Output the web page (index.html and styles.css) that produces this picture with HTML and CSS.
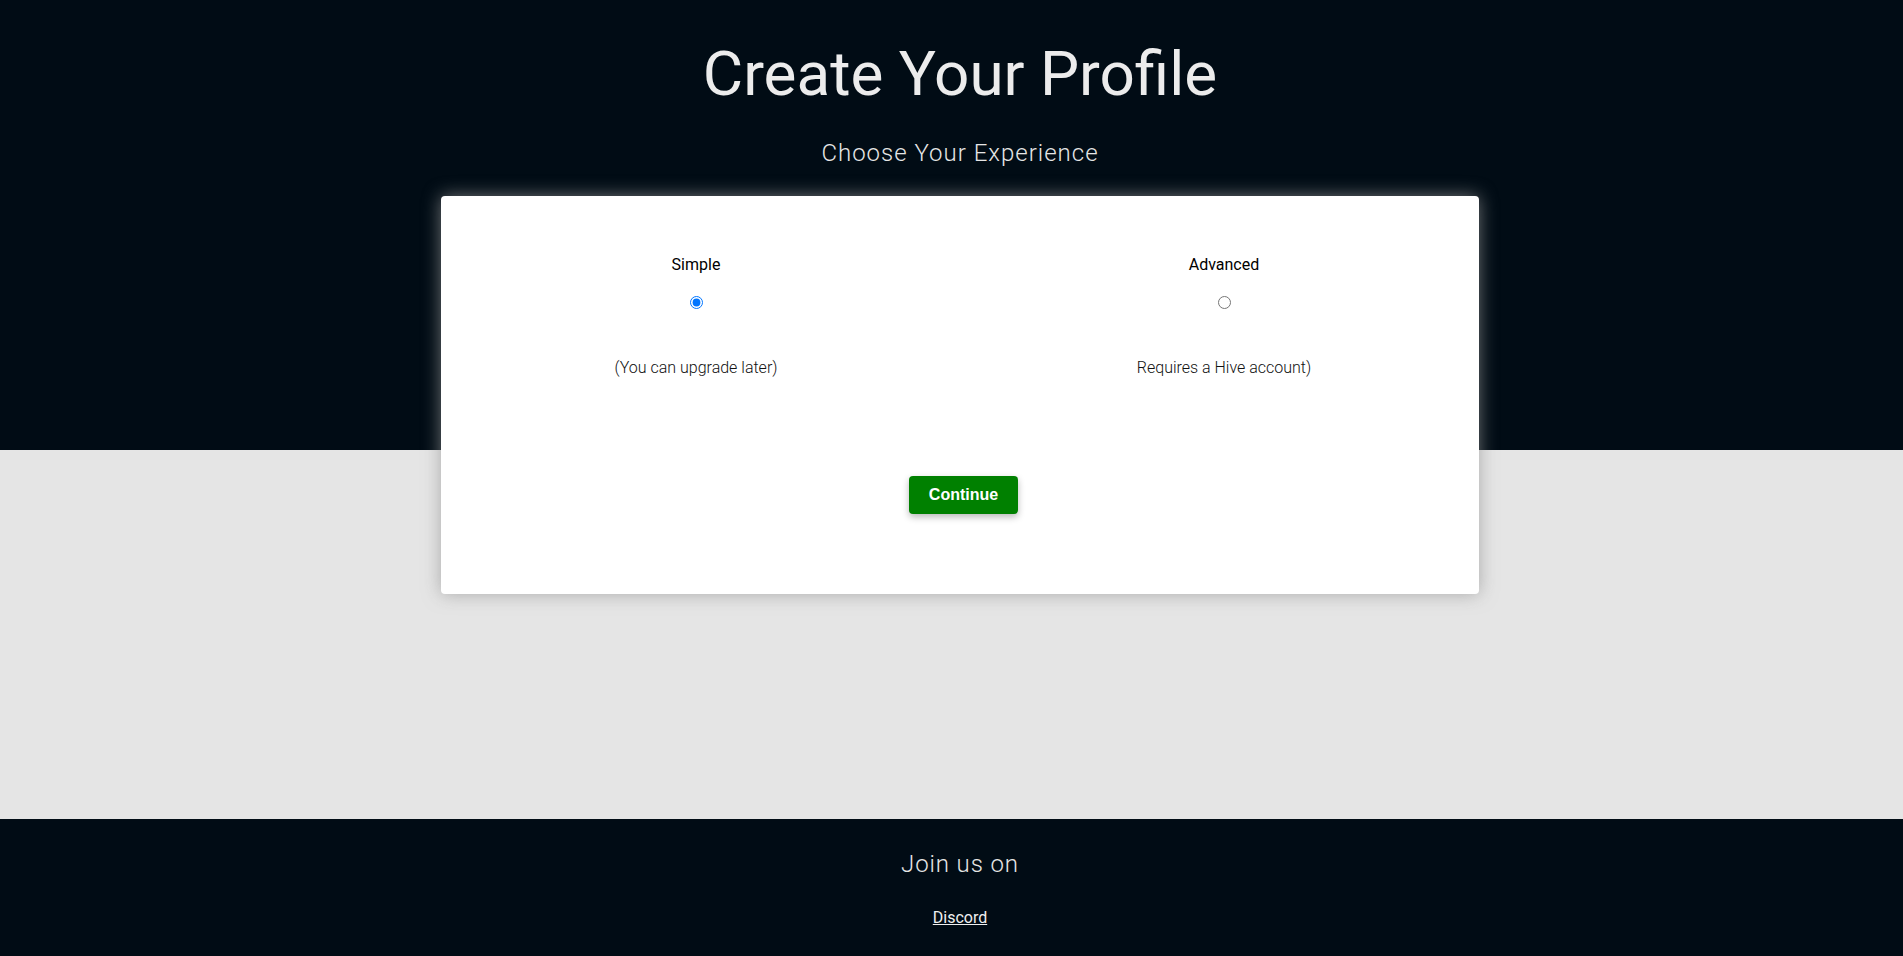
FILE: index.html
```html
<!DOCTYPE html>
<html lang="en">
<head>
<meta charset="utf-8">
<title>Create Your Profile</title>
<link rel="stylesheet" href="styles.css">
</head>
<body>
<main class="page">
  <h1 class="title">Create Your Profile</h1>
  <h2 class="subtitle">Choose Your Experience</h2>
  <section class="card">
    <div class="options">
      <label class="option">
        <span class="option-name">Simple</span>
        <input class="option-radio" type="radio" name="experience" value="simple" checked>
        <span class="option-note">(You can upgrade later)</span>
      </label>
      <label class="option">
        <span class="option-name">Advanced</span>
        <input class="option-radio" type="radio" name="experience" value="advanced">
        <span class="option-note">Requires a Hive account)</span>
      </label>
    </div>
    <div class="actions">
      <button class="continue" type="button">Continue</button>
    </div>
  </section>
</main>
<footer class="footer">
  <p class="footer-title">Join us on</p>
  <a class="footer-link" href="#">Discord</a>
</footer>
</body>
</html>
```

FILE: styles.css
```css
html, body {
  margin: 0;
  padding: 0;
}

body {
  font-family: Roboto, "Liberation Sans", Arial, sans-serif;
  background: #e5e5e5;
}

.page {
  box-sizing: border-box;
  height: 819px;
  padding: 36px 0 0 17px;
  display: flex;
  flex-direction: column;
  align-items: center;
  background: linear-gradient(to bottom, #010c15 0, #010c15 450px, #e5e5e5 450px, #e5e5e5 100%);
}

.title {
  margin: 0;
  font-size: 62px;
  line-height: 75px;
  font-weight: 400;
  color: #ececec;
}

.subtitle {
  margin: 28px 0 0;
  font-size: 24px;
  line-height: 28px;
  font-weight: 300;
  letter-spacing: 1px;
  color: #e6e6e6;
}

.card {
  box-sizing: border-box;
  width: 1038px;
  height: 398px;
  margin-top: 29px;
  padding-top: 59px;
  background: #fff;
  border-radius: 4px;
  box-shadow: 0 0 18px rgba(150, 150, 150, 0.75);
  display: flex;
  flex-direction: column;
}

.options {
  display: grid;
  grid-template-columns: 1fr 1fr;
  column-gap: 18px;
}

.option {
  display: flex;
  flex-direction: column;
  align-items: center;
}

.option-name {
  font-size: 16px;
  line-height: 19px;
  font-weight: 400;
  color: #000;
}

.option-radio {
  width: 13px;
  height: 13px;
  margin: 22px 0 0;
}

.option-note {
  margin-top: 49px;
  font-size: 16px;
  line-height: 19px;
  font-weight: 300;
  color: #111;
}

.actions {
  display: flex;
  justify-content: center;
  margin-top: 99px;
  padding-left: 7px;
}

.continue {
  font-family: "Liberation Sans", Arial, sans-serif;
  font-size: 16px;
  line-height: 18px;
  font-weight: 700;
  color: #fff;
  background: #008000;
  border: none;
  border-radius: 4px;
  padding: 10px 20px;
  box-shadow: 0 3px 7px rgba(0, 0, 0, 0.28);
  cursor: pointer;
}

.footer {
  box-sizing: border-box;
  height: 137px;
  padding: 31px 0 0 17px;
  background: #010c15;
  display: flex;
  flex-direction: column;
  align-items: center;
}

.footer-title {
  margin: 0;
  font-size: 24px;
  line-height: 28px;
  font-weight: 300;
  letter-spacing: 0.9px;
  color: #e6e6e6;
}

.footer-link {
  margin-top: 30px;
  font-size: 16px;
  line-height: 19px;
  color: #f0f0f0;
}
```
